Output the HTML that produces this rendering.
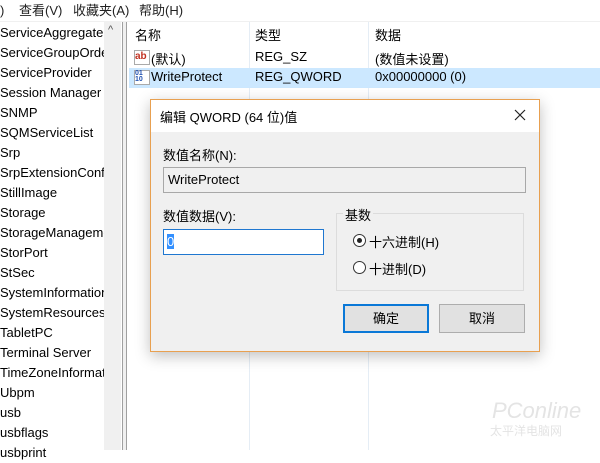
<!DOCTYPE html><html><head><style>
body{margin:0;width:600px;height:450px;overflow:hidden;background:#fff;font-family:"Liberation Sans","Noto Sans CJK SC",sans-serif;font-size:13px;color:#000;position:relative}
.a{position:absolute;white-space:nowrap}
.tree div{height:20px;line-height:20px}
</style></head><body>
<div class="a" style="left:0;top:0;width:600px;height:21px;background:#fff;border-bottom:1px solid #f0f0f0;line-height:21px;color:#222">
<span class="a" style="left:0">)</span><span class="a" style="left:19px">查看(V)</span><span class="a" style="left:73px">收藏夹(A)</span><span class="a" style="left:139px">帮助(H)</span></div>
<div class="a tree" style="left:0;top:23px;width:104px;overflow:hidden">
<div>ServiceAggregate</div><div>ServiceGroupOrder</div><div>ServiceProvider</div><div>Session Manager</div><div>SNMP</div><div>SQMServiceList</div><div>Srp</div><div>SrpExtensionConfig</div><div>StillImage</div><div>Storage</div><div>StorageManagement</div><div>StorPort</div><div>StSec</div><div>SystemInformation</div><div>SystemResources</div><div>TabletPC</div><div>Terminal Server</div><div>TimeZoneInformation</div><div>Ubpm</div><div>usb</div><div>usbflags</div><div>usbprint</div></div>
<div class="a" style="left:104px;top:22px;width:17px;height:428px;background:#f0f0f0"></div>
<div class="a" style="left:108px;top:24px;font-size:11px;color:#555">^</div>
<div class="a" style="left:122px;top:22px;width:5px;height:428px;border-left:1px solid #a0a0a0;border-right:1px solid #a0a0a0;background:#f0f0f0;box-sizing:border-box"></div>
<div class="a" style="left:249px;top:22px;width:1px;height:428px;background:#e5edf5"></div>
<div class="a" style="left:368px;top:22px;width:1px;height:428px;background:#e5edf5"></div>
<div class="a" style="left:135px;top:25px">名称</div><div class="a" style="left:255px;top:25px">类型</div><div class="a" style="left:375px;top:25px">数据</div>
<div class="a" style="left:129px;top:68px;width:471px;height:20px;background:#cce8ff"></div>
<div class="a" style="left:134px;top:50px;width:14px;height:13px;border:1px solid #aaa;background:#fff;color:#c03020;font-size:10px;font-weight:bold;line-height:12px">ab</div>
<div class="a" style="left:134px;top:70px;width:14px;height:13px;border:1px solid #aaa;background:#fff;color:#2050b0;font-size:7px;font-weight:bold;line-height:6px">01<br>10</div>
<div class="a" style="left:151px;top:49px">(默认)</div><div class="a" style="left:255px;top:49px">REG_SZ</div><div class="a" style="left:375px;top:49px">(数值未设置)</div>
<div class="a" style="left:151px;top:69px">WriteProtect</div><div class="a" style="left:255px;top:69px">REG_QWORD</div><div class="a" style="left:375px;top:69px">0x00000000 (0)</div>
<div class="a" style="left:150px;top:99px;width:388px;height:251px;border:1px solid #e8a050;background:#f0f0f0;box-shadow:0 4px 14px rgba(0,0,0,.25)">
<div class="a" style="left:0;top:0;width:388px;height:32px;background:#fff"></div>
<div class="a" style="left:9px;top:7px;font-size:13px">编辑 QWORD (64 位)值</div>
<svg class="a" style="left:363px;top:9px" width="12" height="12"><path d="M1 1L11 11M11 1L1 11" stroke="#222" stroke-width="1.2"/></svg>
<div class="a" style="left:12px;top:45px">数值名称(N):</div>
<div class="a" style="left:12px;top:67px;width:356px;height:24px;border:1px solid #a8a8a8;background:#f0f0f0;line-height:24px;padding-left:4px;box-sizing:content-box;width:357px"></div>
<div class="a" style="left:17px;top:72px">WriteProtect</div>
<div class="a" style="left:12px;top:106px">数值数据(V):</div>
<div class="a" style="left:12px;top:129px;width:159px;height:24px;border:1px solid #1f77d0;background:#fff"><span class="a" style="left:3px;top:4px;background:#3390ff;color:#fff;line-height:15px">0</span></div>
<div class="a" style="left:185px;top:113px;width:186px;height:76px;border:1px solid #dcdcdc"></div>
<div class="a" style="left:192px;top:105px;background:#f0f0f0;padding:0 2px">基数</div>
<div class="a" style="left:202px;top:134px;width:11px;height:11px;border:1px solid #333;border-radius:50%;background:#fff"><div class="a" style="left:3px;top:3px;width:5px;height:5px;border-radius:50%;background:#222"></div></div>
<div class="a" style="left:218px;top:132px">十六进制(H)</div>
<div class="a" style="left:202px;top:161px;width:11px;height:11px;border:1px solid #333;border-radius:50%;background:#fff"></div>
<div class="a" style="left:218px;top:159px">十进制(D)</div>
<div class="a" style="left:192px;top:204px;width:82px;height:25px;border:2px solid #0a78d7;background:#e1e1e1;text-align:center;line-height:25px">确定</div>
<div class="a" style="left:288px;top:204px;width:86px;height:29px;border:1px solid #adadad;background:#e1e1e1;text-align:center;line-height:27px;box-sizing:border-box">取消</div>
</div>
<div class="a" style="left:492px;top:398px;color:#e4e4e4;font-size:22px;font-style:italic">PConline</div>
<div class="a" style="left:490px;top:422px;color:#e4e4e4;font-size:12px">太平洋电脑网</div>
</body></html>
